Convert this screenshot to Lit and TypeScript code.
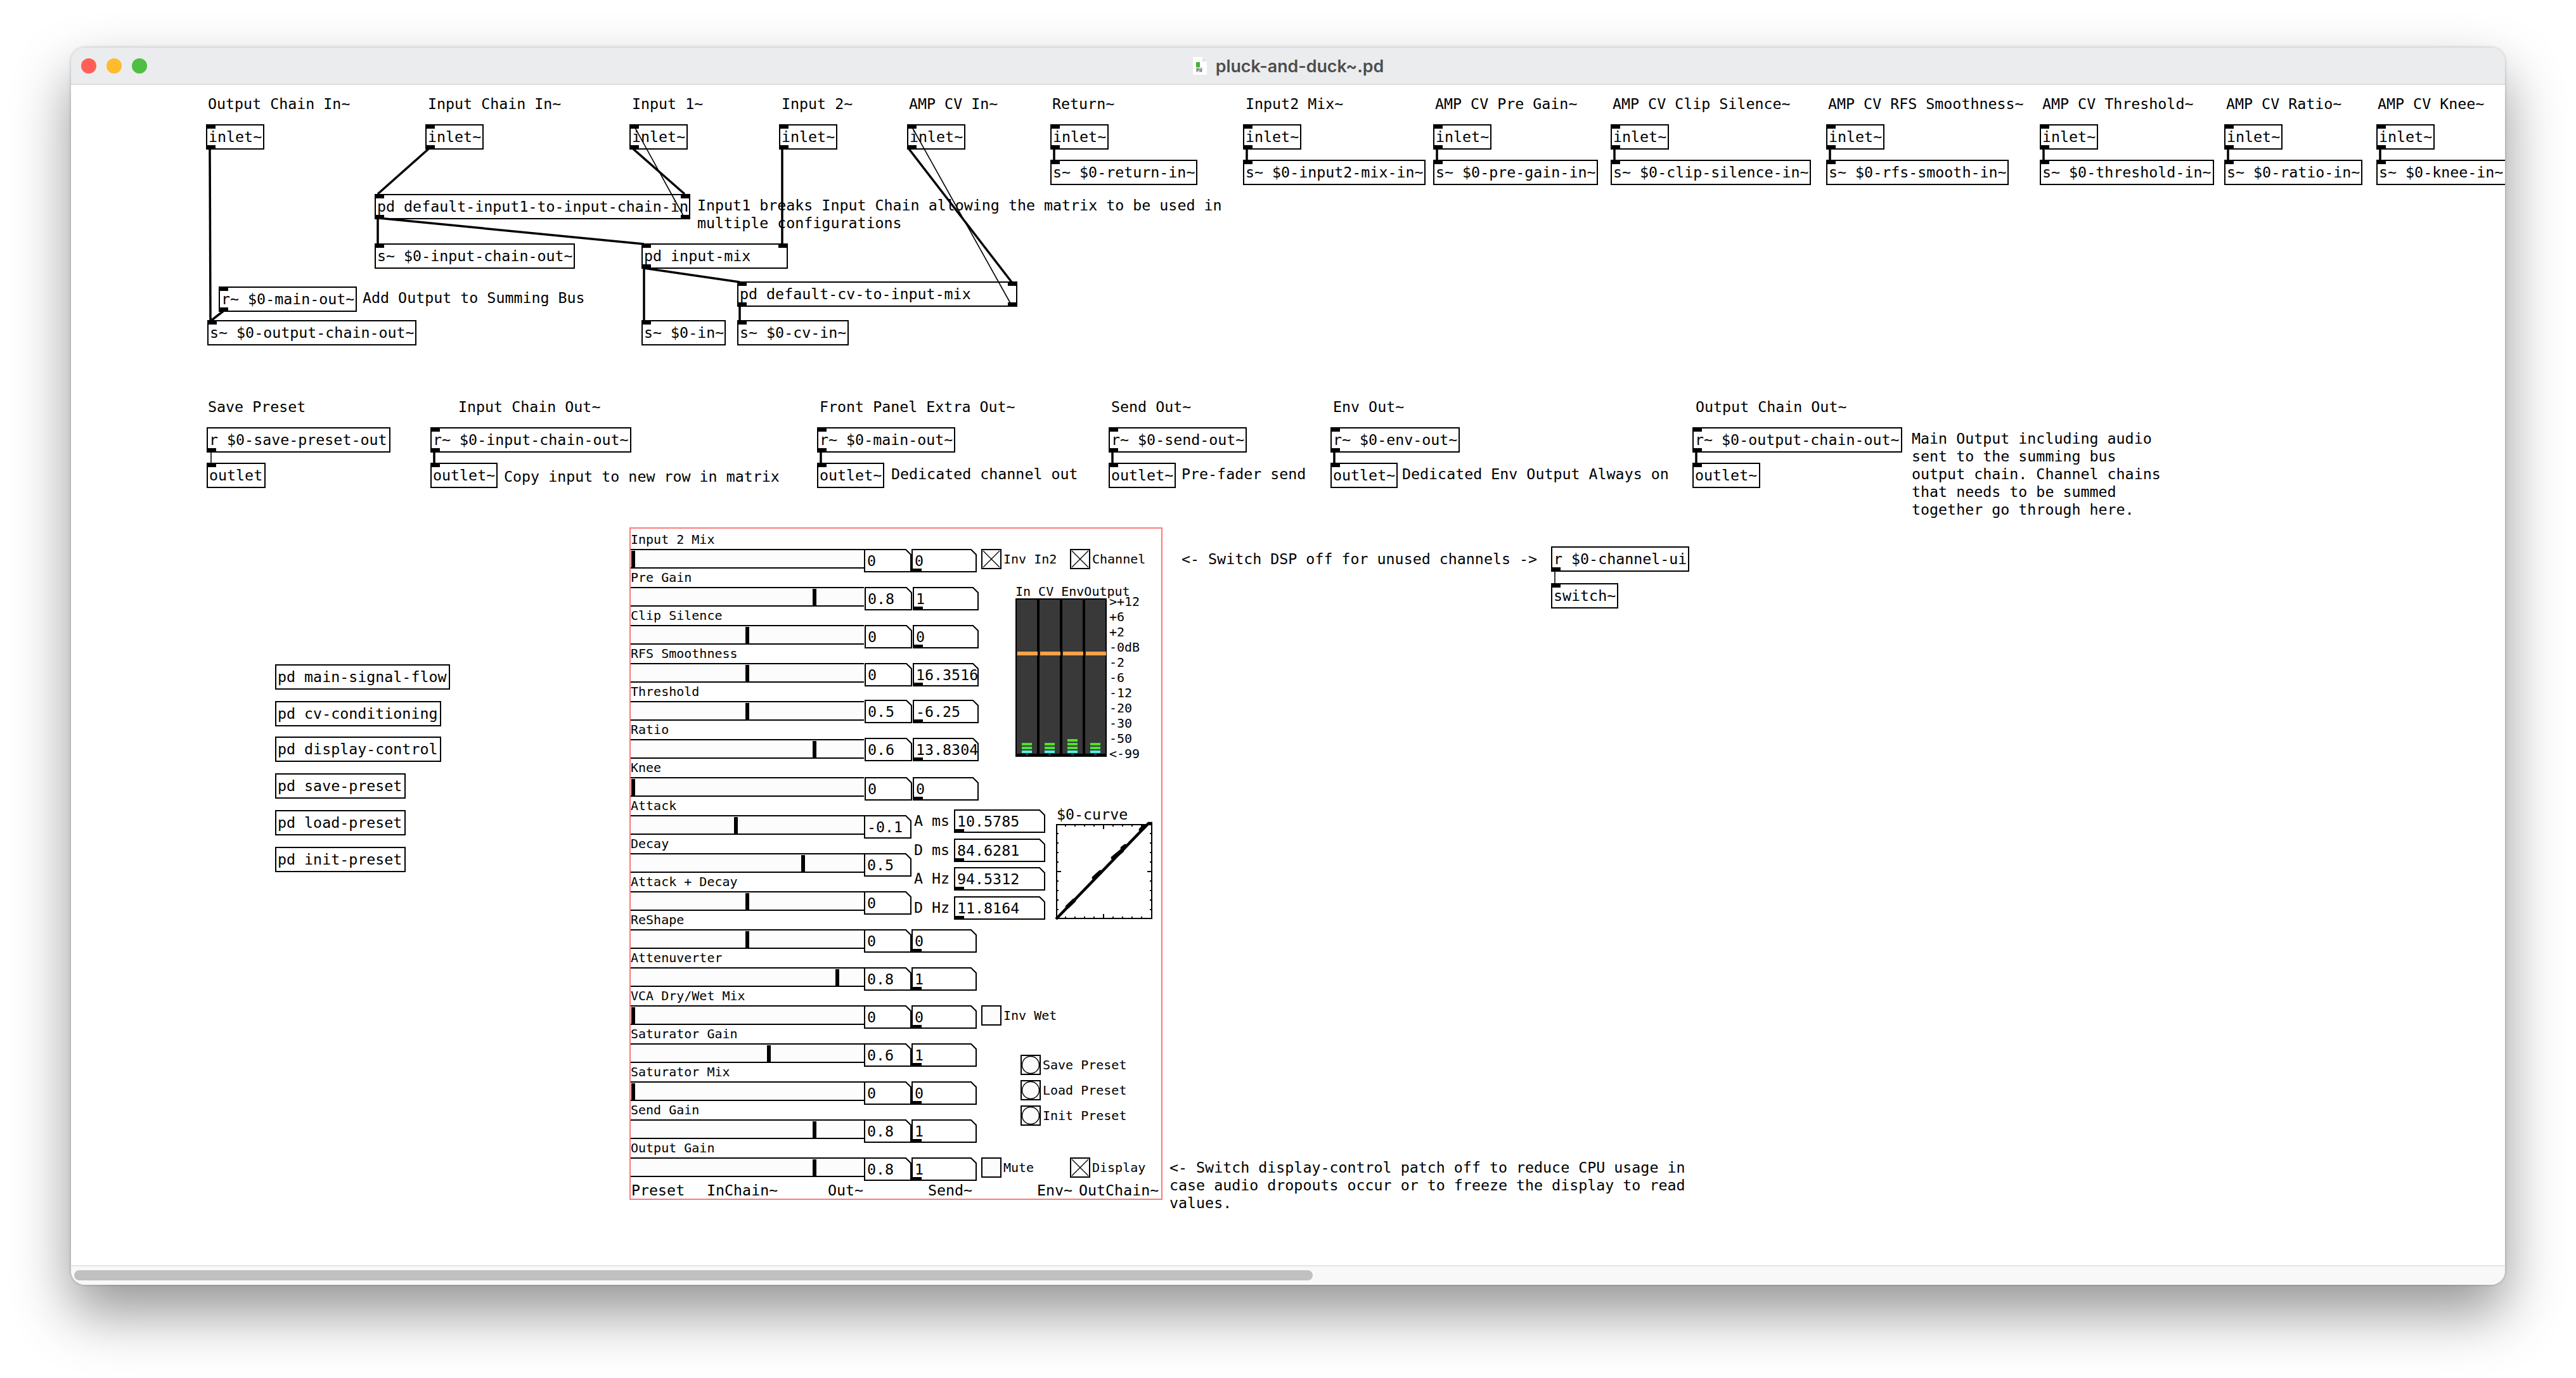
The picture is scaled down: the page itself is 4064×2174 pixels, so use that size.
import { LitElement, css, html, svg } from 'lit';
import { customElement } from 'lit/decorators.js';

// canvas origin in screenshot coordinates, all patch data below uses screenshot px
const OX = 112;
const OY = 134;

interface PdBox {
  x: number;
  y: number;
  r: number;
  text: string;
  ins?: string;
  outs?: string;
}

interface SliderRow {
  name: string;
  handle: number;
  a: string;
  b?: string;
  inset?: boolean;
  lift?: boolean;
  toggles?: [string, boolean][];
}

const LABELS: [number, number, string][] = [
  [328, 164, 'Output Chain In~'],
  [675, 164, 'Input Chain In~'],
  [997, 164, 'Input 1~'],
  [1233, 164, 'Input 2~'],
  [1434, 164, 'AMP CV In~'],
  [1660, 164, 'Return~'],
  [1965, 164, 'Input2 Mix~'],
  [2264, 164, 'AMP CV Pre Gain~'],
  [2544, 164, 'AMP CV Clip Silence~'],
  [2884, 164, 'AMP CV RFS Smoothness~'],
  [3222, 164, 'AMP CV Threshold~'],
  [3512, 164, 'AMP CV Ratio~'],
  [3751, 164, 'AMP CV Knee~'],
  [1100, 324, 'Input1 breaks Input Chain allowing the matrix to be used in\nmultiple configurations'],
  [572, 470, 'Add Output to Summing Bus'],
  [328, 642, 'Save Preset'],
  [723, 642, 'Input Chain Out~'],
  [1293, 642, 'Front Panel Extra Out~'],
  [1753, 642, 'Send Out~'],
  [2103, 642, 'Env Out~'],
  [2675, 642, 'Output Chain Out~'],
  [795, 752, 'Copy input to new row in matrix'],
  [1406, 748, 'Dedicated channel out'],
  [1864, 748, 'Pre-fader send'],
  [2212, 748, 'Dedicated Env Output Always on'],
  [3016, 692, 'Main Output including audio\nsent to the summing bus\noutput chain. Channel chains\nthat needs to be summed\ntogether go through here.'],
  [1864, 882, '<- Switch DSP off for unused channels ->'],
  [1845, 1842, '<- Switch display-control patch off to reduce CPU usage in\ncase audio dropouts occur or to freeze the display to read\nvalues.'],
];

const inlet = (x: number): PdBox => ({ x, y: 196, r: x + 92, text: 'inlet~', ins: 'l', outs: 'l' });
const send = (x: number, r: number, text: string): PdBox => ({ x, y: 252, r, text, ins: 'l' });
const recv = (x: number, r: number, text: string): PdBox => ({ x, y: 674, r, text, ins: 'l', outs: 'l' });
const out = (x: number, r: number): PdBox => ({ x, y: 730, r, text: 'outlet~', ins: 'l' });
const sub = (y: number, r: number, text: string): PdBox => ({ x: 434, y, r, text });

const BOXES: PdBox[] = [
  inlet(325), inlet(671), inlet(993), inlet(1229), inlet(1431), inlet(1657), inlet(1961), inlet(2261),
  inlet(2541), inlet(2881), inlet(3218), inlet(3509), inlet(3749),
  send(1657, 1889, 's~ $0-return-in~'),
  send(1961, 2249, 's~ $0-input2-mix-in~'),
  send(2261, 2521, 's~ $0-pre-gain-in~'),
  send(2541, 2857, 's~ $0-clip-silence-in~'),
  send(2881, 3169, 's~ $0-rfs-smooth-in~'),
  send(3218, 3493, 's~ $0-threshold-in~'),
  send(3509, 3727, 's~ $0-ratio-in~'),
  send(3749, 3960, 's~ $0-knee-in~'),
  { x: 591, y: 306, r: 1089, text: 'pd default-input1-to-input-chain-in', ins: 'lr', outs: 'lr' },
  { x: 591, y: 384, r: 907, text: 's~ $0-input-chain-out~', ins: 'l' },
  { x: 1012, y: 384, r: 1243, text: 'pd input-mix', ins: 'lr', outs: 'l' },
  { x: 345, y: 452, r: 563, text: 'r~ $0-main-out~', ins: 'l', outs: 'l' },
  { x: 327, y: 505, r: 657, text: 's~ $0-output-chain-out~', ins: 'l' },
  { x: 1163, y: 444, r: 1605, text: 'pd default-cv-to-input-mix', ins: 'lr', outs: 'lr' },
  { x: 1012, y: 505, r: 1145, text: 's~ $0-in~', ins: 'l' },
  { x: 1163, y: 505, r: 1339, text: 's~ $0-cv-in~', ins: 'l' },
  { x: 326, y: 674, r: 616, text: 'r $0-save-preset-out', outs: 'l' },
  { x: 326, y: 730, r: 419, text: 'outlet', ins: 'l' },
  recv(679, 996, 'r~ $0-input-chain-out~'),
  out(679, 785),
  recv(1289, 1507, 'r~ $0-main-out~'),
  out(1289, 1395),
  recv(1749, 1967, 'r~ $0-send-out~'),
  out(1749, 1855),
  recv(2099, 2303, 'r~ $0-env-out~'),
  out(2099, 2205),
  recv(2670, 3001, 'r~ $0-output-chain-out~'),
  out(2670, 2777),
  { x: 2447, y: 862, r: 2665, text: 'r $0-channel-ui', outs: 'l' },
  { x: 2447, y: 920, r: 2553, text: 'switch~', ins: 'l' },
  sub(1048, 710, 'pd main-signal-flow'),
  sub(1106, 696, 'pd cv-conditioning'),
  sub(1162, 696, 'pd display-control'),
  sub(1220, 640, 'pd save-preset'),
  sub(1278, 640, 'pd load-preset'),
  sub(1336, 640, 'pd init-preset'),
];

// x1, y1, x2, y2, signal wire?
const WIRES: [number, number, number, number, boolean][] = [
  [331, 235, 332, 505, true],
  [352, 491, 334, 505, true],
  [676, 235, 596, 306, true],
  [999, 235, 1080, 306, true],
  [1001, 200, 1079, 342, false],
  [596, 345, 596, 384, true],
  [597, 344, 1016, 385, true],
  [1234, 235, 1234, 384, true],
  [1016, 423, 1016, 505, true],
  [1016, 423, 1167, 445, true],
  [1167, 483, 1167, 505, true],
  [1434, 235, 1596, 445, true],
  [1438, 199, 1595, 480, false],
  [333, 713, 333, 730, false],
  [685, 713, 685, 730, true],
  [1295, 713, 1295, 730, true],
  [1755, 713, 1755, 730, true],
  [2105, 713, 2105, 730, true],
  [2676, 713, 2676, 730, true],
  [2453, 901, 2453, 920, false],
  ...[1657, 1961, 2261, 2541, 2881, 3218, 3509, 3749].map(
    (x): [number, number, number, number, boolean] => [x + 6, 235, x + 6, 252, true],
  ),
];

const ROWS: SliderRow[] = [
  { name: 'Input 2 Mix', handle: 999, a: '0', b: '0', toggles: [['Inv In2', true], ['Channel', true]] },
  { name: 'Pre Gain', handle: 1285, a: '0.8', b: '1', inset: true },
  { name: 'Clip Silence', handle: 1179, a: '0', b: '0', inset: true },
  { name: 'RFS Smoothness', handle: 1179, a: '0', b: '16.3516', inset: true },
  { name: 'Threshold', handle: 1179, a: '0.5', b: '-6.25', inset: true, lift: true },
  { name: 'Ratio', handle: 1285, a: '0.6', b: '13.8304', inset: true, lift: true },
  { name: 'Knee', handle: 999, a: '0', b: '0', inset: true },
  { name: 'Attack', handle: 1161, a: '-0.1' },
  { name: 'Decay', handle: 1267, a: '0.5' },
  { name: 'Attack + Decay', handle: 1179, a: '0' },
  { name: 'ReShape', handle: 1179, a: '0', b: '0' },
  { name: 'Attenuverter', handle: 1321, a: '0.8', b: '1' },
  { name: 'VCA Dry/Wet Mix', handle: 999, a: '0', b: '0', toggles: [['Inv Wet', false]] },
  { name: 'Saturator Gain', handle: 1213, a: '0.6', b: '1' },
  { name: 'Saturator Mix', handle: 999, a: '0', b: '0' },
  { name: 'Send Gain', handle: 1285, a: '0.8', b: '1' },
  { name: 'Output Gain', handle: 1285, a: '0.8', b: '1', toggles: [['Mute', false], ['Display', true]] },
];

const READOUTS = [
  ['A ms', '10.5785'],
  ['D ms', '84.6281'],
  ['A Hz', '94.5312'],
  ['D Hz', '11.8164'],
];

const SCALE = ['>+12', '+6', '+2', '-0dB', '-2', '-6', '-12', '-20', '-30', '-50', '<-99'];
const LEDS = [2, 2, 3, 2];

// short heavier stretches where the table plot steps
const CURVE_BUMPS = [
  [18, 130.5, 28, 121],
  [60, 85, 70, 76],
  [90, 53.5, 104, 42],
  [105, 38, 109, 35],
  [134, 9, 140, 3.5],
];

@customElement('app-root')
export class AppRoot extends LitElement {
  static styles = css`
    :host {
      display: block;
      width: 4064px;
      height: 2174px;
      background: #fff;
      box-sizing: border-box;
      padding: 75px 112px 147px;
      font-family: 'DejaVu Sans Mono', 'Liberation Mono', monospace;
      color: #000;
    }
    .window {
      height: 100%;
      display: flex;
      flex-direction: column;
      border-radius: 22px;
      overflow: hidden;
    }
    .shadow {
      height: 100%;
      border-radius: 22px;
      box-shadow: 0 44px 90px rgba(0, 0, 0, 0.42), 0 0 4px rgba(0, 0, 0, 0.25);
    }
    .titlebar {
      flex: none;
      height: 59px;
      box-sizing: border-box;
      background: #ebecee;
      border-bottom: 2px solid #dcdcde;
      display: flex;
      align-items: center;
      justify-content: center;
      gap: 13px;
      position: relative;
    }
    .lights {
      position: absolute;
      left: 16px;
      top: 17px;
      display: flex;
      gap: 16px;
    }
    .light {
      width: 24px;
      height: 24px;
      border-radius: 50%;
    }
    .title {
      font-family: Inter, 'Liberation Sans', sans-serif;
      font-weight: 600;
      font-size: 26.8px;
      color: #4d4d4d;
    }
    .canvas {
      flex: 1;
      position: relative;
      overflow: hidden;
      background: #fff;
    }
    .scrollbar {
      flex: none;
      height: 31px;
      box-sizing: border-box;
      background: #f8f8f8;
      border-top: 2px solid #e4e4e4;
      padding: 6px 5px 0;
    }
    .thumb {
      width: 1954px;
      height: 16px;
      border-radius: 8px;
      background: #c0c0c0;
    }
    .box {
      position: absolute;
      box-sizing: border-box;
      border: 2px solid #000;
      background: #fff;
      font-size: 23.3px;
      line-height: 36px;
      padding-left: 2px;
    }
    .box span {
      white-space: pre;
    }
    .iolet {
      position: absolute;
      width: 15px;
      height: 5px;
      background: #000;
    }
    .iolet.top {
      top: 0;
    }
    .iolet.bottom {
      bottom: 0;
    }
    .iolet.l {
      left: -2px;
    }
    .iolet.r {
      right: -2px;
    }
    .comment {
      position: absolute;
      font-size: 23.3px;
      line-height: 28px;
      white-space: pre;
    }
    .wires {
      position: absolute;
      inset: 0;
      pointer-events: none;
    }
    .panel {
      position: absolute;
      left: 881px;
      top: 698px;
      width: 841px;
      height: 1061px;
      box-sizing: border-box;
      border: 2px solid #fa7a7a;
      padding-top: 2px;
    }
    .row {
      height: 60px;
    }
    .name {
      height: 30px;
      line-height: 30px;
      font-size: 20px;
      white-space: pre;
    }
    .controls {
      display: flex;
      align-items: flex-start;
      height: 31px;
    }
    .slider {
      position: relative;
      width: 368px;
      height: 31px;
      box-sizing: border-box;
      background: #fcfcfc;
      border-top: 2px solid #000;
      border-bottom: 2px solid #000;
    }
    .handle {
      position: absolute;
      top: 1px;
      width: 6px;
      height: 26px;
      background: #000;
    }
    .num {
      position: relative;
      flex: none;
      height: 37px;
      font-size: 23.3px;
      line-height: 37px;
      padding-left: 5px;
      box-sizing: border-box;
    }
    .num svg {
      position: absolute;
      left: 0;
      top: 0;
    }
    .num span {
      position: relative;
      white-space: pre;
    }
    .num .iolet {
      left: 1px;
      bottom: 0;
      width: 15px;
      height: 6px;
    }
    .inset {
      margin-left: 1px;
    }
    .lift {
      margin-top: -2px;
    }
    .toggles {
      display: flex;
      margin-left: 7px;
    }
    .toggle {
      display: flex;
      align-items: center;
      gap: 3px;
      width: 140px;
      height: 32px;
      font-size: 20px;
    }
    .check {
      flex: none;
      width: 32px;
      height: 32px;
      box-sizing: border-box;
      border: 2px solid #000;
      background: #fcfcfc;
      display: block;
    }
    .footer {
      display: grid;
      grid-template-columns: 119px 191px 158px 172px 66px auto;
      padding-left: 1px;
      font-size: 23.3px;
      line-height: 44px;
      white-space: pre;
    }
    .meter {
      position: absolute;
      left: 607px;
      top: 88px;
      font-size: 20px;
    }
    .meter-head {
      line-height: 22px;
      white-space: pre;
    }
    .meter-body {
      display: flex;
      gap: 4px;
    }
    .strips {
      display: flex;
      gap: 4px;
      width: 144px;
      height: 250px;
      box-sizing: border-box;
      padding: 2px;
      background: #000;
    }
    .strip {
      position: relative;
      width: 32px;
      height: 243px;
      background: #393939;
      display: flex;
      flex-direction: column;
      justify-content: flex-end;
      align-items: center;
      gap: 2px;
      padding-bottom: 1px;
      box-sizing: border-box;
    }
    .strip::after {
      content: '';
      position: absolute;
      left: 14px;
      bottom: -3px;
      width: 4px;
      height: 3px;
      background: #333;
    }
    .peak {
      position: absolute;
      left: 1px;
      top: 82px;
      width: 32px;
      height: 6px;
      background: #f9a24a;
    }
    .led {
      width: 16px;
      height: 4px;
      background: #50e030;
    }
    .led.low {
      background: #4ff0ec;
    }
    .scale {
      margin-top: -7px;
      line-height: 24px;
    }
    .readouts {
      position: absolute;
      left: 447px;
      top: 443px;
      display: flex;
      flex-direction: column;
      gap: 8.67px;
    }
    .readout {
      display: flex;
      height: 37px;
      font-size: 23.3px;
      line-height: 36px;
    }
    .readout-name {
      width: 63px;
      white-space: pre;
    }
    .curve {
      position: absolute;
      left: 671px;
      top: 437px;
      font-size: 23.3px;
      line-height: 28px;
    }
    .curve-title {
      padding-left: 1px;
    }
    .curve svg {
      display: block;
      margin-top: 1px;
      overflow: visible;
    }
    .bangs {
      position: absolute;
      left: 615px;
      top: 830px;
      display: flex;
      flex-direction: column;
      gap: 8px;
    }
    .bang {
      display: flex;
      align-items: center;
      gap: 3px;
      height: 32px;
      font-size: 20px;
      white-space: nowrap;
    }
  `;

  private box(b: PdBox) {
    const pos = `left:${b.x - OX}px;top:${b.y - OY}px;width:${b.r - b.x}px;height:40px`;
    return html`<div class="box" style=${pos}>
      ${[...(b.ins ?? '')].map((s) => html`<div class="iolet top ${s}"></div>`)}
      ${[...(b.outs ?? '')].map((s) => html`<div class="iolet bottom ${s}"></div>`)}
      <span>${b.text}</span>
    </div>`;
  }

  private num(value: string, w: number, cls: string, outlet = false) {
    return html`<div class="num ${cls}" style="width:${w}px">
      <svg width=${w} height="37">
        <path d="M1 1H${w - 9}L${w - 1} 9V36H1Z" fill="#fff" stroke="#000" stroke-width="2" />
      </svg>
      ${outlet ? html`<div class="iolet"></div>` : ''}
      <span>${value}</span>
    </div>`;
  }

  private row(r: SliderRow) {
    const inset = r.inset ? 'inset' : '';
    const lift = r.lift ? 'lift' : '';
    return html`<div class="row">
      <div class="name">${r.name}</div>
      <div class="controls">
        <div class="slider"><div class="handle" style="left:${r.handle - 3 - 995}px"></div></div>
        ${this.num(r.a, 75, `${inset} ${lift}`)}
        ${r.b ? this.num(r.b, r.inset ? 104 : 103, `${inset} ${lift}`, true) : ''}
        ${r.toggles
          ? html`<div class="toggles">
              ${r.toggles.map(([label, on]) => html`<div class="toggle">${this.check(on)}${label}</div>`)}
            </div>`
          : ''}
      </div>
    </div>`;
  }

  private check(on: boolean) {
    return html`<svg class="check" viewBox="0 0 28 28">
      ${on ? svg`<path d="M1 1L27 27M27 1L1 27" stroke="#000" stroke-width="1.3" fill="none" />` : ''}
    </svg>`;
  }

  private meter() {
    return html`<div class="meter">
      <div class="meter-head">In CV EnvOutput</div>
      <div class="meter-body">
        <div class="strips">
          ${LEDS.map(
            (n) => html`<div class="strip">
              <div class="peak"></div>
              ${Array.from({ length: n }, () => html`<div class="led"></div>`)}
              <div class="led low"></div>
            </div>`,
          )}
        </div>
        <div class="scale">${SCALE.map((s) => html`<div>${s}</div>`)}</div>
      </div>
    </div>`;
  }

  private curve() {
    const ticks = Array.from({ length: 9 }, (_, i) => 15 * (i + 1));
    return html`<div class="curve">
      <div class="curve-title">$0-curve</div>
      <svg width="152" height="150" viewBox="0 0 152 150">
        <rect x="1" y="1" width="150" height="148" fill="#fff" stroke="#000" stroke-width="2" />
        ${ticks.map((t) => {
          const len = t === 75 ? 8 : 4;
          return svg`<path
            d="M${t} 0v${len}M${t} 150v-${len}M0 ${t}h${len}M152 ${t}h-${len}"
            stroke="#000"
            stroke-width="2"
          />`;
        })}
        <polyline points="0,150 141,4 146,-1 152,-1" fill="none" stroke="#000" stroke-width="4.5" />
        ${CURVE_BUMPS.map(
          ([x1, y1, x2, y2]) =>
            svg`<line x1=${x1} y1=${y1} x2=${x2} y2=${y2} stroke="#000" stroke-width="6.5" stroke-linecap="round" />`,
        )}
      </svg>
    </div>`;
  }

  render() {
    return html`<div class="shadow">
      <div class="window">
        <div class="titlebar">
          <div class="lights">
            <div class="light" style="background:#ff5f57"></div>
            <div class="light" style="background:#febc2e"></div>
            <div class="light" style="background:#4ebf42"></div>
          </div>
          <svg width="24" height="28" viewBox="0 0 24 28">
            <path d="M1 0H16L23 7V28H1Z" fill="#fff" />
            <path d="M16 0V7H23" fill="#e2e2e2" />
            <rect x="6" y="8" width="6" height="8" fill="#3fb52f" />
            <rect x="6" y="16" width="10" height="8" fill="#d8d8d8" />
            <text x="6.5" y="23" font-size="7" font-family="Liberation Sans" fill="#222">Pd</text>
          </svg>
          <div class="title">pluck-and-duck~.pd</div>
        </div>
        <div class="canvas">
          ${BOXES.map((b) => this.box(b))}
          ${LABELS.map(
            ([x, y, t]) => html`<div class="comment" style="left:${x - OX}px;top:${y - OY - 14}px">${t}</div>`,
          )}
          <div class="panel">
            ${ROWS.map((r) => this.row(r))}
            <div class="footer">
              <span>Preset</span><span>InChain~</span><span>Out~</span><span>Send~</span><span>Env~</span><span>OutChain~</span>
            </div>
            ${this.meter()}
            <div class="readouts">
              ${READOUTS.map(
                ([name, v]) => html`<div class="readout">
                  <div class="readout-name">${name}</div>
                  ${this.num(v, 144, '', true)}
                </div>`,
              )}
            </div>
            ${this.curve()}
            <div class="bangs">
              ${['Save Preset', 'Load Preset', 'Init Preset'].map(
                (t) => html`<div class="bang">
                  <svg class="check" viewBox="0 0 28 28">
                    <circle cx="14" cy="14" r="13.5" fill="none" stroke="#000" stroke-width="1.5" />
                  </svg>
                  ${t}
                </div>`,
              )}
            </div>
          </div>
          <svg class="wires" width="3840" height="1862" viewBox="${OX} ${OY} 3840 1862">
            ${WIRES.map(
              ([x1, y1, x2, y2, thick]) =>
                svg`<line x1=${x1} y1=${y1} x2=${x2} y2=${y2} stroke="#000" stroke-width=${thick ? 3.5 : 1.6} />`,
            )}
          </svg>
        </div>
        <div class="scrollbar"><div class="thumb"></div></div>
      </div>
    </div>`;
  }
}
